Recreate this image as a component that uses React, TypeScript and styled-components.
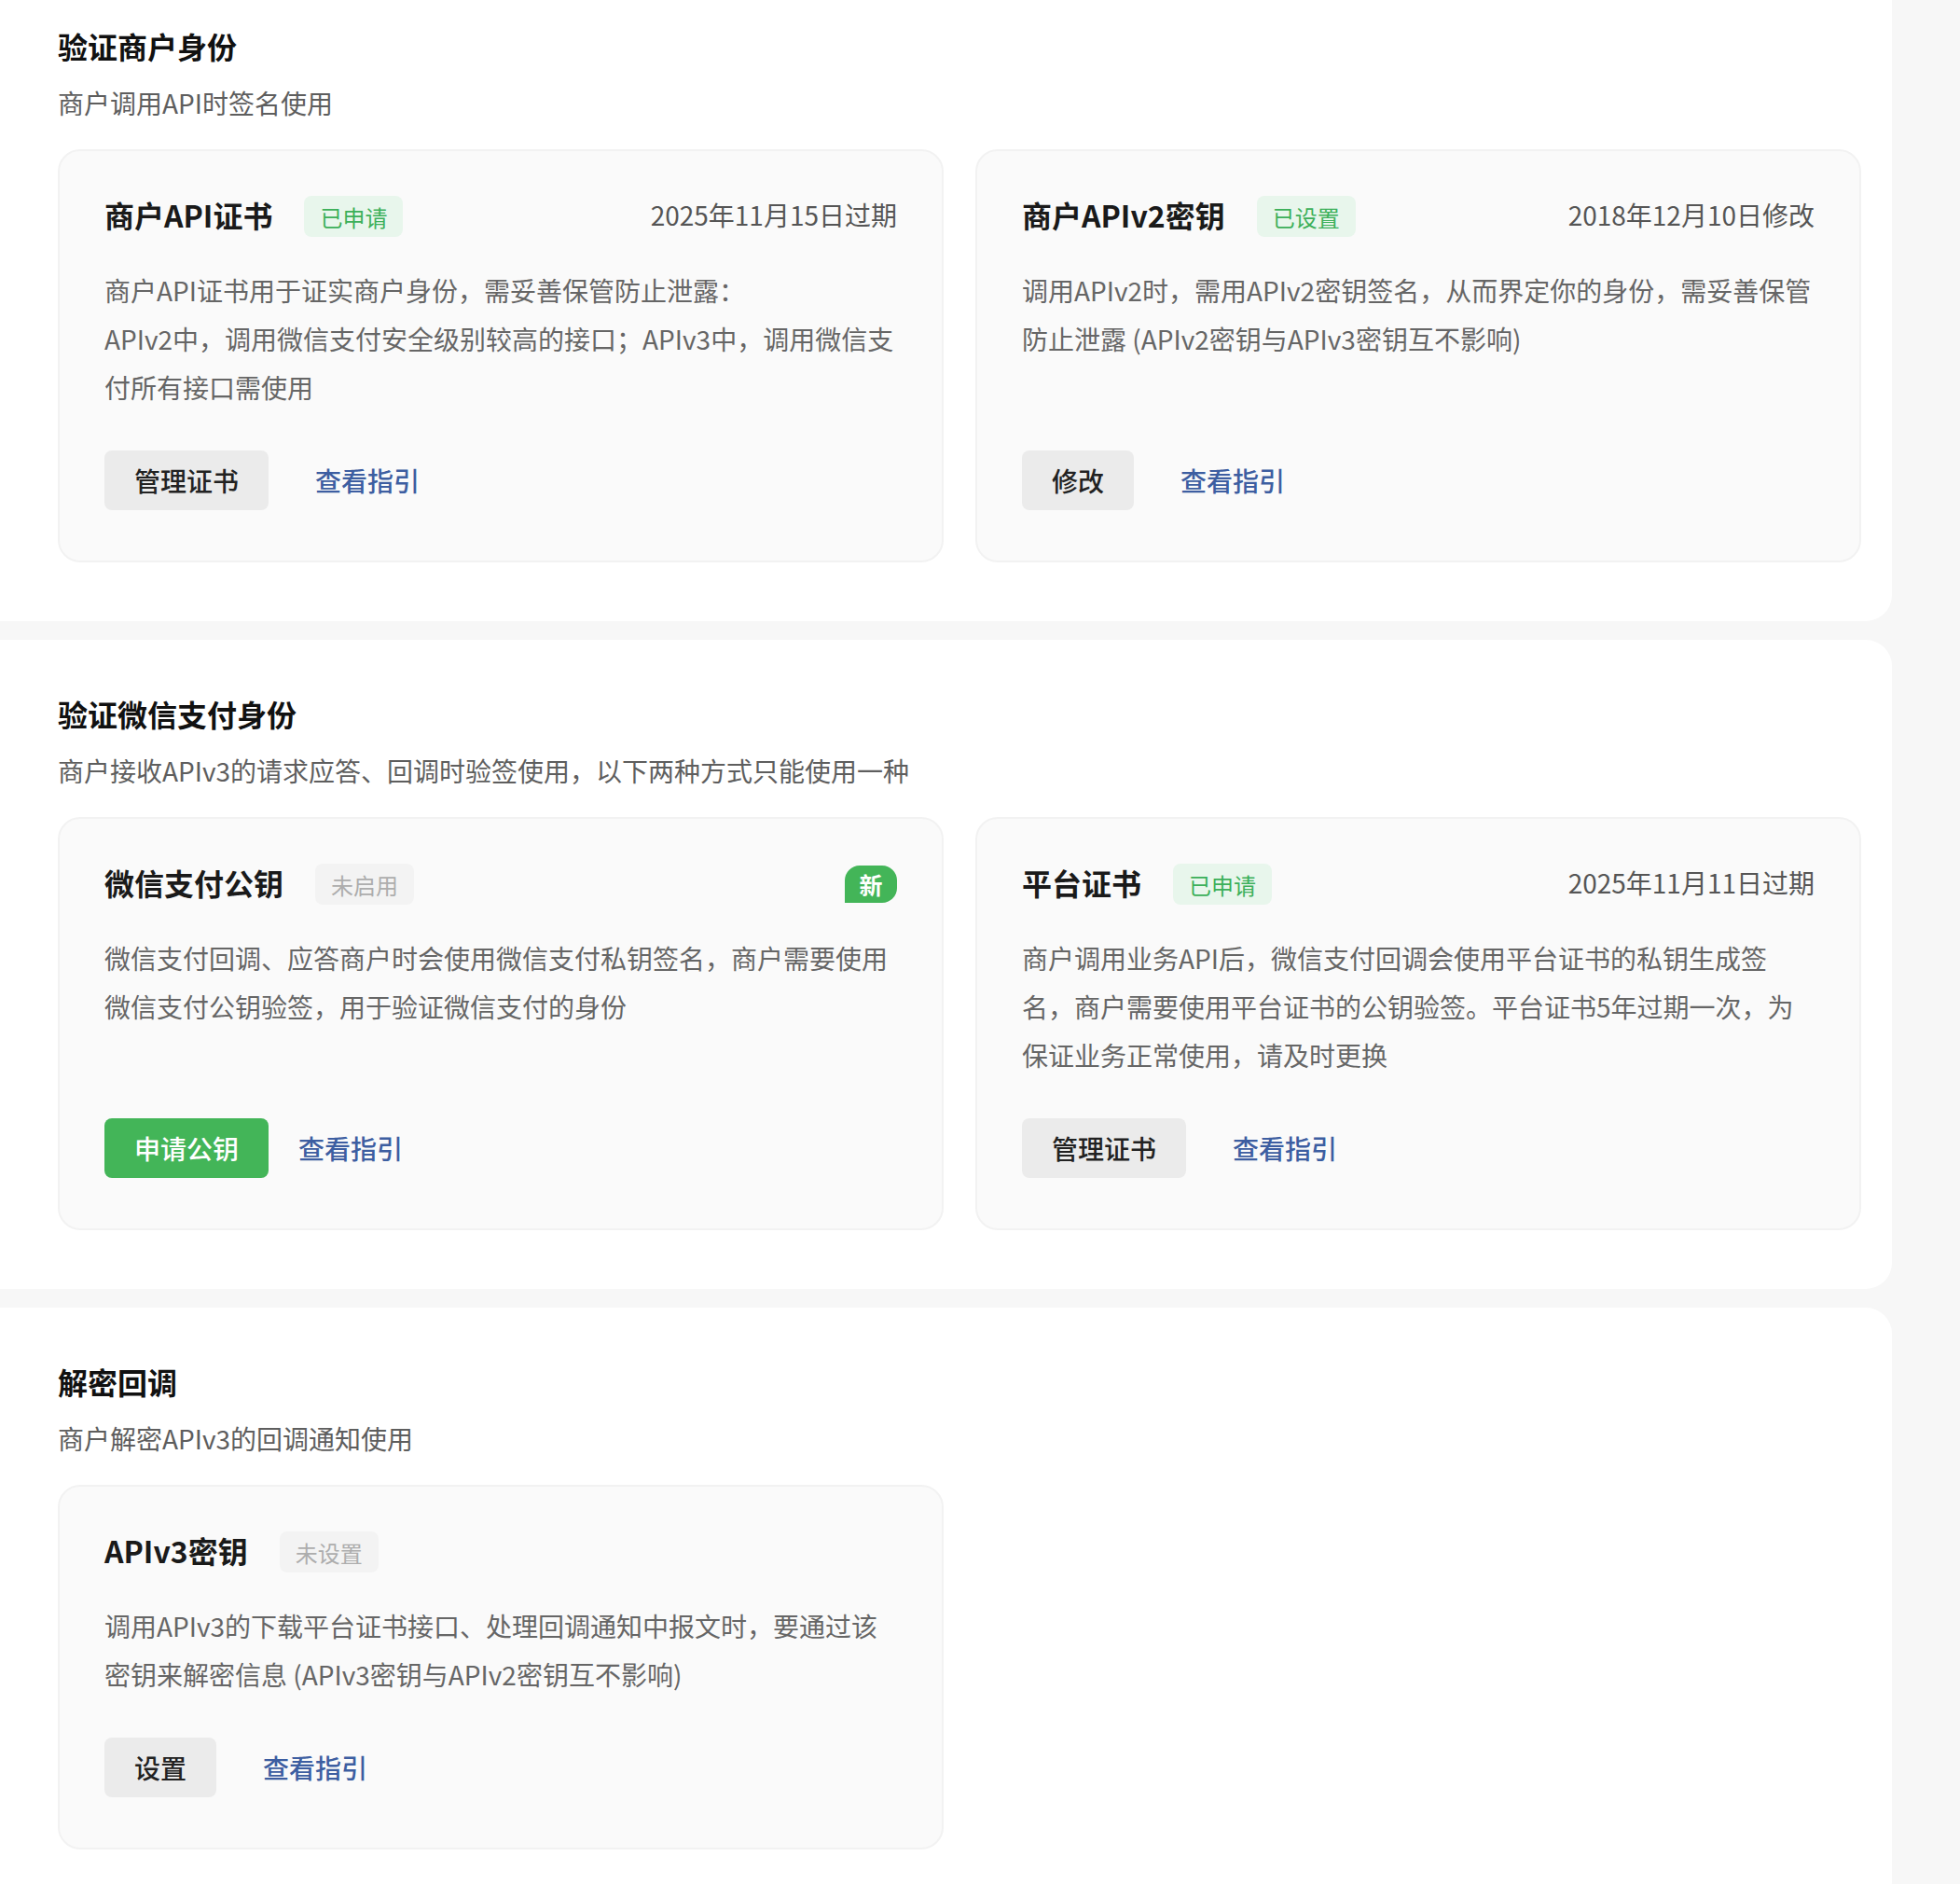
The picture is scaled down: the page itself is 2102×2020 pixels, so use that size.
import React from 'react';
import styled, { createGlobalStyle } from 'styled-components';

const GlobalStyle = createGlobalStyle`
  html, body {
    margin: 0;
    padding: 0;
    background: #f7f7f7;
    font-family: "Noto Sans CJK SC", "Noto Sans", sans-serif;
    -webkit-font-smoothing: antialiased;
  }
`;

const Page = styled.div`
  display: flex;
  flex-direction: column;
  gap: 20px;
  padding-right: 73px;
  margin-top: -30px;
`;

const Panel = styled.section`
  background: #fff;
  border-radius: 0 28px 28px 0;
  padding: 56px 33px 63px 62px;
`;

const SectionTitle = styled.h2`
  margin: 0;
  font-size: 32px;
  line-height: 46px;
  font-weight: 700;
  color: #111;
`;

const SectionDesc = styled.p`
  margin: 18px 0 0;
  font-size: 28px;
  line-height: 40px;
  color: #5e5e5e;
`;

const CardGrid = styled.div`
  display: grid;
  grid-template-columns: 1fr 1fr;
  column-gap: 34px;
  margin-top: 30px;
`;

const Card = styled.div`
  display: flex;
  flex-direction: column;
  background: #fafafa;
  border: 2px solid #f2f2f2;
  border-radius: 24px;
  padding: 48px 48px 54px;
`;

const CardHead = styled.div`
  display: flex;
  align-items: center;
  height: 44px;
`;

const CardTitle = styled.h3`
  margin: 0 0 4px;
  font-size: 32px;
  line-height: 40px;
  font-weight: 600;
  color: #1a1a1a;
`;

const Badge = styled.span<{ $tone: 'ok' | 'off' }>`
  display: inline-flex;
  align-items: center;
  height: 44px;
  margin-left: 34px;
  padding: 0 17px;
  border-radius: 8px;
  font-size: 24px;
  background: ${(p) => (p.$tone === 'ok' ? '#e8f6ec' : '#f3f3f3')};
  color: ${(p) => (p.$tone === 'ok' ? '#3cb05a' : '#adadad')};
`;

const Meta = styled.span`
  margin-left: auto;
  margin-bottom: 4px;
  font-size: 28px;
  color: #555;
`;

const NewTag = styled.span`
  margin-left: auto;
  width: 56px;
  height: 40px;
  display: inline-flex;
  align-items: center;
  justify-content: center;
  background: #43b558;
  color: #fff;
  font-size: 25px;
  font-weight: 600;
  border-radius: 16px 16px 16px 0;
`;

const CardDesc = styled.p`
  margin: 31px 0 0;
  font-size: 28px;
  line-height: 52px;
  color: #666;
  white-space: nowrap;
`;

const Actions = styled.div`
  display: flex;
  align-items: center;
  margin-top: auto;
  padding-top: 42px;
`;

const Button = styled.button<{ $primary?: boolean }>`
  height: 64px;
  padding: 0 32px;
  border: none;
  border-radius: 8px;
  font-family: inherit;
  font-size: 28px;
  font-weight: 500;
  cursor: pointer;
  background: ${(p) => (p.$primary ? '#43b558' : '#ebebeb')};
  color: ${(p) => (p.$primary ? '#fff' : '#222')};
`;

const GuideLink = styled.a<{ $tight?: boolean }>`
  margin-left: ${(p) => (p.$tight ? '32px' : '50px')};
  font-size: 28px;
  font-weight: 500;
  color: #3d5ea1;
  text-decoration: none;
  cursor: pointer;
`;

type Tone = 'ok' | 'off';

interface CardData {
  title: string;
  badge: string;
  tone: Tone;
  meta?: string;
  isNew?: boolean;
  lines: string[];
  action: string;
  primary?: boolean;
}

interface SectionData {
  title: string;
  desc: string;
  cards: CardData[];
}

const sections: SectionData[] = [
  {
    title: '验证商户身份',
    desc: '商户调用API时签名使用',
    cards: [
      {
        title: '商户API证书',
        badge: '已申请',
        tone: 'ok',
        meta: '2025年11月15日过期',
        lines: [
          '商户API证书用于证实商户身份，需妥善保管防止泄露：',
          'APIv2中，调用微信支付安全级别较高的接口；APIv3中，调用微信支',
          '付所有接口需使用',
        ],
        action: '管理证书',
      },
      {
        title: '商户APIv2密钥',
        badge: '已设置',
        tone: 'ok',
        meta: '2018年12月10日修改',
        lines: [
          '调用APIv2时，需用APIv2密钥签名，从而界定你的身份，需妥善保管',
          '防止泄露 (APIv2密钥与APIv3密钥互不影响)',
        ],
        action: '修改',
      },
    ],
  },
  {
    title: '验证微信支付身份',
    desc: '商户接收APIv3的请求应答、回调时验签使用，以下两种方式只能使用一种',
    cards: [
      {
        title: '微信支付公钥',
        badge: '未启用',
        tone: 'off',
        isNew: true,
        lines: [
          '微信支付回调、应答商户时会使用微信支付私钥签名，商户需要使用',
          '微信支付公钥验签，用于验证微信支付的身份',
        ],
        action: '申请公钥',
        primary: true,
      },
      {
        title: '平台证书',
        badge: '已申请',
        tone: 'ok',
        meta: '2025年11月11日过期',
        lines: [
          '商户调用业务API后，微信支付回调会使用平台证书的私钥生成签',
          '名，商户需要使用平台证书的公钥验签。平台证书5年过期一次，为',
          '保证业务正常使用，请及时更换',
        ],
        action: '管理证书',
      },
    ],
  },
  {
    title: '解密回调',
    desc: '商户解密APIv3的回调通知使用',
    cards: [
      {
        title: 'APIv3密钥',
        badge: '未设置',
        tone: 'off',
        lines: [
          '调用APIv3的下载平台证书接口、处理回调通知中报文时，要通过该',
          '密钥来解密信息 (APIv3密钥与APIv2密钥互不影响)',
        ],
        action: '设置',
      },
    ],
  },
];

const KeyCard: React.FC<{ card: CardData }> = ({ card }) => (
  <Card>
    <CardHead>
      <CardTitle>{card.title}</CardTitle>
      <Badge $tone={card.tone}>{card.badge}</Badge>
      {card.meta && <Meta>{card.meta}</Meta>}
      {card.isNew && <NewTag>新</NewTag>}
    </CardHead>
    <CardDesc>
      {card.lines.map((line, i) => (
        <React.Fragment key={i}>
          {i > 0 && <br />}
          {line}
        </React.Fragment>
      ))}
    </CardDesc>
    <Actions>
      <Button $primary={card.primary}>{card.action}</Button>
      <GuideLink $tight={card.primary}>查看指引</GuideLink>
    </Actions>
  </Card>
);

const App: React.FC = () => (
  <>
    <GlobalStyle />
    <Page>
      {sections.map((s) => (
        <Panel key={s.title}>
          <SectionTitle>{s.title}</SectionTitle>
          <SectionDesc>{s.desc}</SectionDesc>
          <CardGrid>
            {s.cards.map((c) => (
              <KeyCard key={c.title} card={c} />
            ))}
          </CardGrid>
        </Panel>
      ))}
    </Page>
  </>
);

export default App;
